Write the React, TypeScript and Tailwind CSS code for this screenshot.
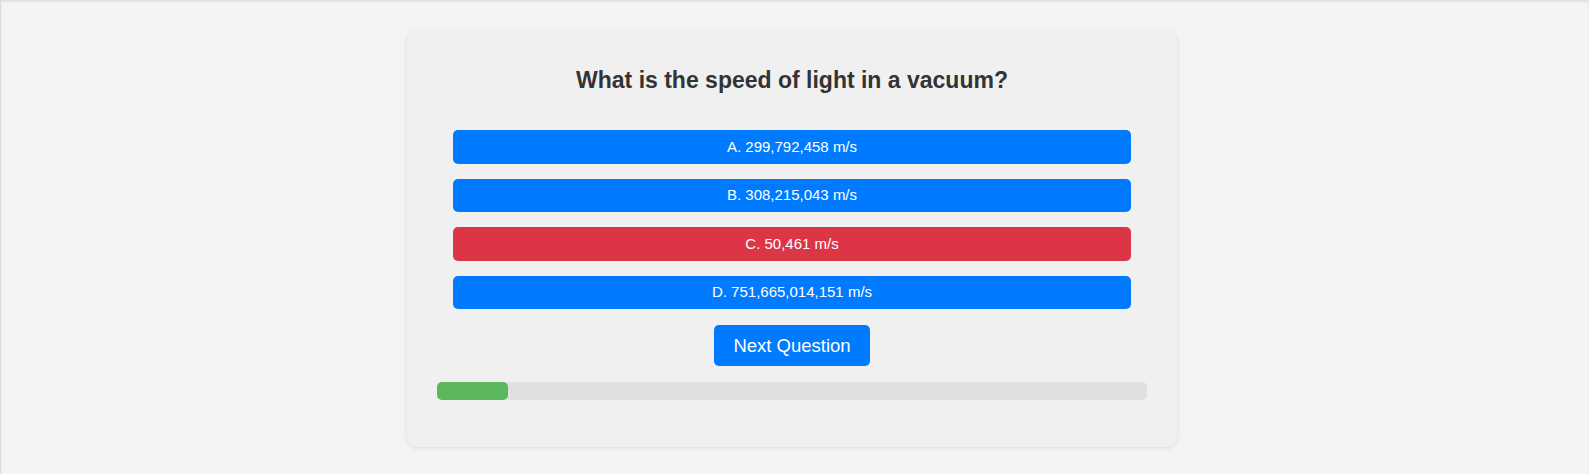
import React from 'react';

const options = [
  { label: 'A. 299,792,458 m/s', wrong: false },
  { label: 'B. 308,215,043 m/s', wrong: false },
  { label: 'C. 50,461 m/s', wrong: true },
  { label: 'D. 751,665,014,151 m/s', wrong: false },
];

export default function App() {
  const progress = 10;

  return (
    <div className="min-h-[474px] bg-[#f4f4f4] border-l border-[#dcdcdc] shadow-[inset_0_2px_2px_rgba(0,0,0,0.08)] pt-[31px] pr-[6px] font-['Liberation_Sans',Arial,sans-serif]">
      {/* Quiz card */}
      <div className="mx-auto w-[770px] rounded-[10px] bg-[#f0f0f0] p-[30px] pb-[47px] shadow-[0_1px_5px_rgba(0,0,0,0.1)]">
        <h2 className="mt-[6px] text-center text-[23px] font-bold leading-[26px] text-[#333]">
          What is the speed of light in a vacuum?
        </h2>

        {/* Answers */}
        <div className="mx-4 mt-[37px] flex flex-col gap-[15px]">
          {options.map((o) => (
            <button
              key={o.label}
              className={`h-[33.5px] w-full rounded-[5px] text-[15px] text-white ${
                o.wrong ? 'bg-[#dc3545]' : 'bg-[#007bff]'
              }`}
            >
              {o.label}
            </button>
          ))}
        </div>

        <div className="mt-4 flex justify-center">
          <button className="h-[41px] rounded-[5px] bg-[#007bff] px-[19px] text-[18.5px] text-white">
            Next Question
          </button>
        </div>

        {/* Progress */}
        <div className="mt-4 h-[18px] w-full rounded-[5px] bg-[#e0e0e0]">
          <div className="h-full rounded-[5px] bg-[#5cb85c]" style={{ width: `${progress}%` }} />
        </div>
      </div>
    </div>
  );
}
